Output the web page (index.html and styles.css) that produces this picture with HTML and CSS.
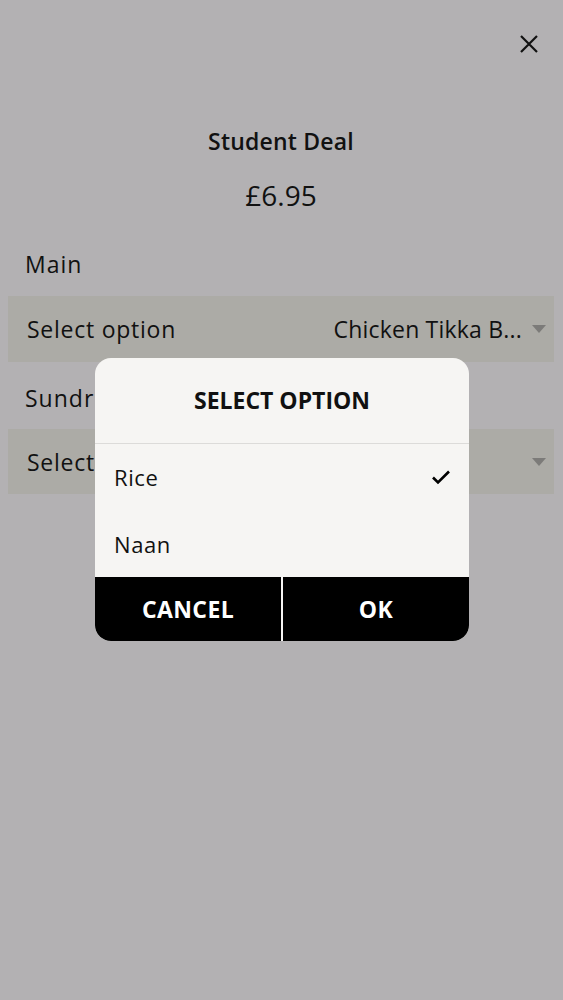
FILE: index.html
```html
<!DOCTYPE html>
<html lang="en">
<head>
    <meta charset="UTF-8">
    <meta name="viewport" content="width=device-width, initial-scale=1.0">
    <title>Student Deal</title>
    <link rel="stylesheet" href="styles.css">
</head>
<body>
    <!-- Deal page (dimmed behind the picker) -->
    <div class="page">
        <div class="top-bar">
            <svg class="close-icon" width="18" height="18" viewBox="0 0 18 18">
                <path d="M1 1 L17 17 M17 1 L1 17" stroke="#111" stroke-width="2.2" fill="none"/>
            </svg>
        </div>

        <h1 class="deal-title">Student Deal</h1>
        <div class="deal-price">£6.95</div>

        <div class="option-group">
            <div class="option-label">Main</div>
            <div class="select-row">
                <span>Select option</span>
                <span class="select-value">Chicken Tikka B...</span>
                <span class="caret"></span>
            </div>
        </div>

        <div class="option-group">
            <div class="option-label">Sundries</div>
            <div class="select-row">
                <span>Select option</span>
                <span class="select-value"></span>
                <span class="caret"></span>
            </div>
        </div>
    </div>

    <!-- Picker dialog -->
    <div class="dialog">
        <div class="dialog-title">SELECT OPTION</div>
        <ul class="dialog-list">
            <li class="dialog-item">
                <span>Rice</span>
                <svg width="20" height="16" viewBox="0 0 20 16">
                    <path d="M2 8.5 L7 13.5 L18 2.5" stroke="#000" stroke-width="2.6" fill="none"/>
                </svg>
            </li>
            <li class="dialog-item">
                <span>Naan</span>
            </li>
        </ul>
        <div class="dialog-buttons">
            <button class="dialog-btn">CANCEL</button>
            <button class="dialog-btn">OK</button>
        </div>
    </div>
</body>
</html>
```

FILE: styles.css
```css
body {
    font-family: "Open Sans", "Liberation Sans", Arial, sans-serif;
    margin: 0;
    padding: 0;
    background-color: #b3b1b3;
    color: #111;
    height: 1000px;
    overflow: hidden;
}
.page {
    padding: 0 9px 0 8px;
}
.top-bar {
    display: flex;
    justify-content: flex-end;
    padding: 35px 16px 0 0;
    height: 28px;
}
.deal-title {
    margin: 64px 0 0;
    font-size: 23px;
    font-weight: 600;
    letter-spacing: 0.2px;
    text-align: center;
    line-height: 28px;
}
.deal-price {
    margin-top: 24px;
    font-size: 28px;
    text-align: center;
    line-height: 32px;
}
.option-label {
    font-size: 23px;
    letter-spacing: 1px;
    padding: 39px 0 0 17px;
    line-height: 28px;
    height: 46px;
}
.option-group + .option-group .option-label {
    padding-top: 22px;
    height: 45px;
}
.select-row {
    display: flex;
    align-items: center;
    height: 66px;
    padding: 0 8px 0 19px;
    background-color: #acaba6;
    font-size: 23px;
    letter-spacing: 0.75px;
    white-space: nowrap;
}
.option-group + .option-group .select-row {
    height: 65px;
}
.select-value {
    margin-left: auto;
    letter-spacing: 0.2px;
}
.caret {
    width: 0;
    height: 0;
    margin-left: 10px;
    border-left: 7.5px solid transparent;
    border-right: 7.5px solid transparent;
    border-top: 8px solid #7c7b79;
}
.dialog {
    position: absolute;
    top: 358px;
    left: 95px;
    width: 374px;
    background-color: #f6f5f3;
    border-radius: 16px;
    overflow: hidden;
}
.dialog-title {
    height: 85px;
    line-height: 85px;
    text-align: center;
    font-size: 23px;
    font-weight: 700;
    border-bottom: 1px solid #dcdbd9;
}
.dialog-list {
    list-style: none;
    margin: 0;
    padding: 0;
}
.dialog-item {
    display: flex;
    justify-content: space-between;
    align-items: center;
    height: 66px;
    padding: 0 18px 0 19px;
    font-size: 22px;
    letter-spacing: 0.6px;
}
.dialog-item + .dialog-item {
    height: 67px;
}
.dialog-buttons {
    display: grid;
    grid-template-columns: 1fr 1fr;
    gap: 2px;
    background-color: #f6f5f3;
}
.dialog-btn {
    height: 64px;
    border: none;
    background-color: #000;
    color: #fff;
    font-family: inherit;
    font-size: 23px;
    font-weight: 700;
    letter-spacing: 0.4px;
}
```
